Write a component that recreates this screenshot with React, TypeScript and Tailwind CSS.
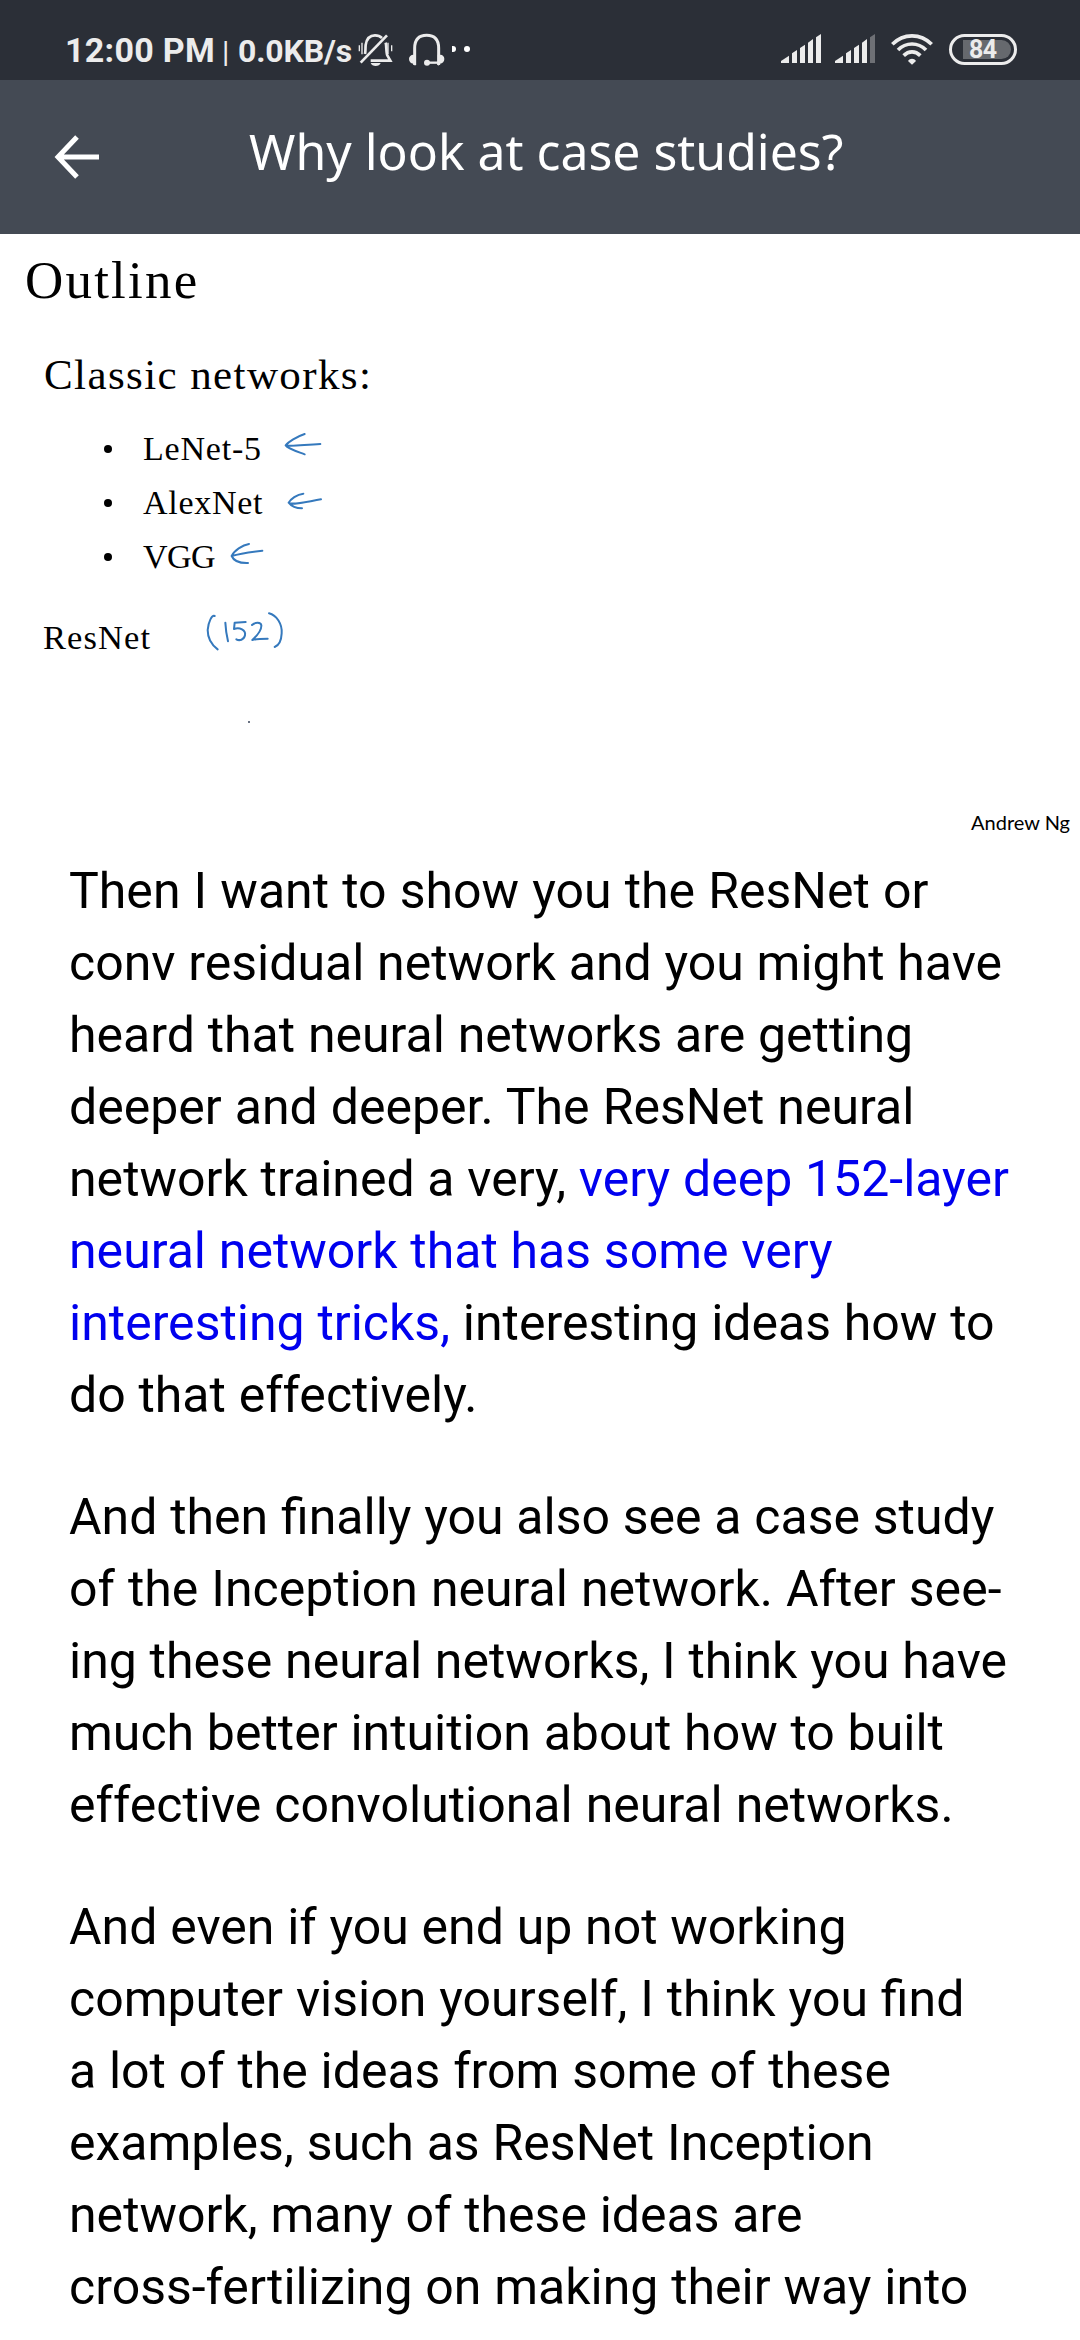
import React from "react";

const ink = "#3579bd";

function BellOff() {
  return (
    <svg className="absolute left-[358px] top-[32px] h-[36px] w-[36px]" viewBox="0 0 108 108" fill="none" stroke="#ececec" strokeWidth="8">
      <path d="M21 66C23 58 22 48 23 39C26 19 37 10 51 10C60 10 67 13 72 18M83 32C86 42 84 62 88 70L97 86H38" />
      <path d="M8 92L87 10" />
      <path d="M5 40V58M13 32V67M91 32V67M102 40V58" strokeWidth="4" transform="translate(-1 0)" />
      <path d="M38 93H68C66 99 60 102 53 102S40 99 38 93Z" fill="#ececec" stroke="none" />
    </svg>
  );
}

function Headset() {
  return (
    <svg className="absolute left-[408px] top-[32px] h-[36px] w-[38px]" viewBox="0 0 114 108" fill="none" stroke="#ececec" strokeWidth="9">
      <path d="M20 99V49C20 23 33 10 56 10S92 23 92 49V99" />
      <path d="M23 68H16C9 68 3 73 3 81S8 95 16 95L21 101L23 99ZM89 68H97C104 68 109 73 109 81S104 95 96 95L91 101L89 99Z" fill="#ececec" stroke="none" />
      <path d="M57 92H92" strokeWidth="7" />
      <circle cx="57" cy="92" r="9" fill="#ececec" stroke="none" />
    </svg>
  );
}

function Signal({ weak = false }: { weak?: boolean }) {
  return (
    <svg className="h-[30px] w-[41px]" viewBox="0 0 123 90" fill="#ececec">
      <path d="M0 87V81L24 65V87Z" />
      <path d="M33 87V58L48 48V87ZM57 87V42L72 32V87ZM81 87V26L96 15V87Z" />
      <path d="M105 87V10L120 0V87Z" opacity={weak ? 0.35 : 1} />
    </svg>
  );
}

function Wifi() {
  return (
    <svg className="h-[31px] w-[42px]" viewBox="0 0 126 93" fill="none" stroke="#ececec" strokeWidth="11">
      <path d="M4 31C37 -3 89 -3 122 31" />
      <path d="M21 48C45 24 81 24 105 48" />
      <path d="M38 65C53 50 73 50 88 65" />
      <path d="M51 81C57 72 69 72 75 81L63 92Z" fill="#ececec" stroke="none" />
    </svg>
  );
}

function StatusBar() {
  return (
    <div className="relative flex h-20 w-full bg-[#2b2f37] font-[Roboto] text-[#ececec]">
      <div className="flex items-baseline pl-[65px] pt-[28px] leading-[44px] whitespace-nowrap">
        <span className="w-[157px] text-[34px] font-bold tracking-[0.3px]">12:00 PM</span>
        <span className="w-[16px] text-[30px]">|</span>
        <span className="text-[32px] font-bold tracking-[-0.15px]">0.0KB/s</span>
      </div>
      <BellOff />
      <Headset />
      <div className="absolute left-[452px] top-[46px] h-[6px] w-1 rounded-r-full bg-white" />
      <div className="absolute left-[464px] top-[46px] h-[6px] w-[6px] rounded-full bg-white" />
      <div className="ml-auto flex pr-[63px] pt-[34px]">
        <Signal />
        <div className="ml-[13px]"><Signal weak /></div>
        <div className="ml-[15px]"><Wifi /></div>
        <div className="ml-4 flex h-[31px] w-[68px] rounded-full border-3 border-[#ececec] pl-[11px] pt-[3px]">
          <div className="flex h-[19px] w-12 items-center rounded-r-full bg-[#66696e] pl-[6px] text-[25px] font-bold leading-none tracking-tight">
            84
          </div>
        </div>
      </div>
    </div>
  );
}

function Header() {
  return (
    <header className="flex h-[154px] w-full bg-[#444a54] text-white">
      <svg className="ml-[54px] mt-[54px] h-[46px] w-[46px]" viewBox="0 0 46 46" fill="none" stroke="white" strokeWidth="5">
        <path d="M23 3L4 23L23 43M4 23H45" />
      </svg>
      <h1 className="ml-[149px] mt-[37px] whitespace-nowrap font-['Noto_Sans'] text-[49.9px] leading-[68px]">
        Why look at case studies?
      </h1>
    </header>
  );
}

function Bullet({ label, labelClass, viewBox, d }: { label: string; labelClass: string; viewBox: string; d: string }) {
  return (
    <li className="flex h-[54px] items-center leading-[54px]">
      <span className="h-2 w-2 rounded-full bg-black" />
      <span className={labelClass}>{label}</span>
      <svg className="h-[54px] w-[42px]" viewBox={viewBox} fill="none" stroke={ink} strokeWidth="6" strokeLinecap="round" strokeLinejoin="round">
        <path d={d} />
      </svg>
    </li>
  );
}

function Slide() {
  return (
    <section className="h-[614px] w-full pt-[14px] font-['Liberation_Serif'] text-black">
      <h2 className="ml-[25px] text-[53px] leading-[64px] tracking-[2.2px]">Outline</h2>
      <h3 className="ml-[44px] mt-[35px] text-[43px] leading-[56px] tracking-[1.4px]">Classic networks:</h3>
      <ul className="ml-[104px] mt-[19px] text-[34px]">
        <Bullet
          label="LeNet-5"
          labelClass="ml-[31px] w-[139px] tracking-[0.8px]"
          viewBox="606 36 126 162"
          d="M674 72C650 80 625 95 617 106C630 110 665 105 721 102M617 106C624 116 650 124 674 133"
        />
        <Bullet
          label="AlexNet"
          labelClass="ml-[31px] w-[139px] tracking-[0.7px]"
          viewBox="606 198 126 162"
          d="M670 251C650 253 632 268 626 278C636 286 675 276 723 268M626 278C632 286 645 295 666 295"
        />
        <Bullet
          label="VGG"
          labelClass="ml-[31px] w-[84px] tracking-[-0.6px]"
          viewBox="441 360 126 162"
          d="M507 402C487 405 462 422 455 438C480 430 510 426 547 422M455 438C460 450 475 460 504 459"
        />
      </ul>
      <div className="mt-[26px] flex">
        <span className="ml-[43px] w-[157px] text-[34.5px] leading-[54px] tracking-[1.1px]">ResNet</span>
        <svg className="h-[54px] w-[90px]" viewBox="600 60 270 162" fill="none" stroke={ink} strokeWidth="6" strokeLinecap="round" strokeLinejoin="round">
          <path d="M644 78C636 74 625 95 623 120C623 148 637 166 653 178" />
          <path d="M676 98C677 118 680 137 684 154" />
          <path d="M737 96L704 98L702 117C719 111 738 120 735 136C732 150 718 153 709 148" />
          <path d="M756 105C765 96 783 96 784 106C785 120 768 140 757 150C772 146 788 146 803 146" />
          <path d="M807 70C830 76 847 102 845 130C844 150 837 166 824 171" />
        </svg>
      </div>
      <div className="ml-[248px] mt-[57px] h-[2px] w-[2px] bg-gray-500" />
      <p className="mr-[10px] mt-[85px] text-right font-[Lato] text-[20px] leading-[28px]">Andrew Ng</p>
    </section>
  );
}

export default function App() {
  return (
    <div className="h-[2340px] w-[1080px] overflow-hidden bg-white">
      <StatusBar />
      <Header />
      <Slide />
      <main className="mt-[7px] flex flex-col gap-[50px] whitespace-nowrap pl-[69px] font-[Roboto] text-[50px] leading-[72px] text-black [word-spacing:0.35px]">
        <p>
          <span className="[word-spacing:0.7px]">Then I want to show you the ResNet or</span><br />
          conv residual network and you might have<br />
          heard that neural networks are getting<br />
          <span className="[word-spacing:0.6px]">deeper and deeper. The ResNet neural</span><br />
          network trained a very, <span className="text-[#0000ee]">very deep 152-layer<br />
          neural network that has some very<br />
          interesting tricks,</span> interesting ideas how to<br />
          do that effectively.
        </p>
        <p>
          And then finally you also see a case study<br />
          <span className="[word-spacing:0.6px]">of the Inception neural network. After see-</span><br />
          ing these neural networks, I think you have<br />
          much better intuition about how to built<br />
          <span className="[word-spacing:0.6px]">effective convolutional neural networks.</span>
        </p>
        <p>
          And even if you end up not working<br />
          <span className="[word-spacing:0.5px]">computer vision yourself, I think you find</span><br />
          a lot of the ideas from some of these<br />
          <span className="[word-spacing:0.5px]">examples, such as ResNet Inception</span><br />
          network, many of these ideas are<br />
          cross-fertilizing on making their way into
        </p>
      </main>
    </div>
  );
}
